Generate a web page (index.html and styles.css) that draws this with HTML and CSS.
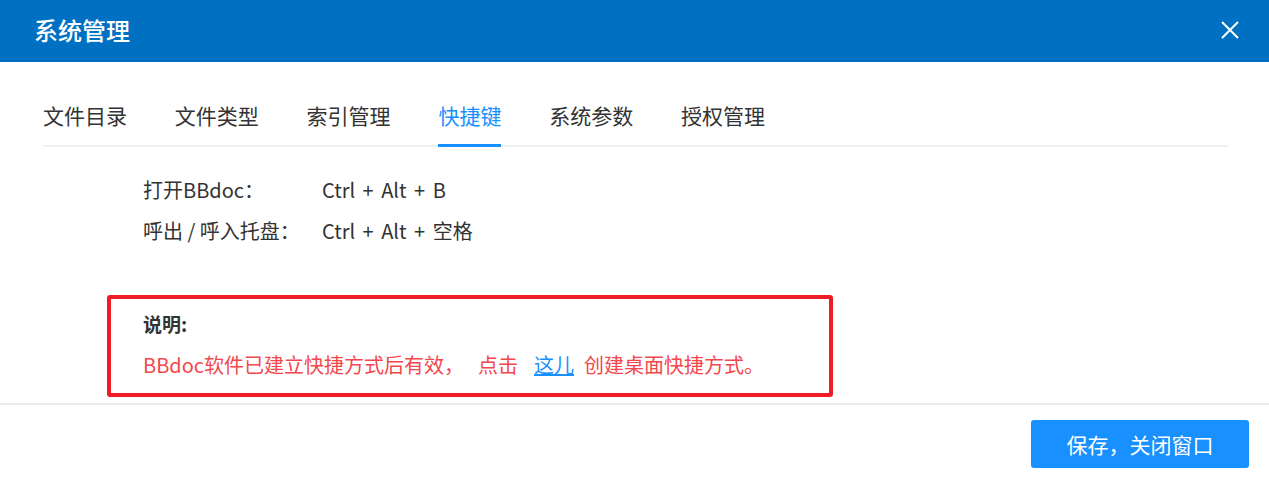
FILE: index.html
```html
<!DOCTYPE html>
<html lang="zh-CN">
<head>
    <meta charset="UTF-8">
    <meta name="viewport" content="width=device-width, initial-scale=1.0">
    <title>系统管理</title>
    <link rel="stylesheet" href="styles.css">
</head>
<body>
    <div class="dialog">
        <div class="dialog-header">
            <h1>系统管理</h1>
            <span class="close-btn">
                <svg width="18" height="18" viewBox="0 0 18 18">
                    <path d="M1 1 L17 17 M17 1 L1 17" stroke="#fff" stroke-width="2" fill="none"/>
                </svg>
            </span>
        </div>

        <div class="tabs">
            <span class="tab">文件目录</span>
            <span class="tab">文件类型</span>
            <span class="tab">索引管理</span>
            <span class="tab active">快捷键</span>
            <span class="tab">系统参数</span>
            <span class="tab">授权管理</span>
        </div>

        <div class="tab-body">
            <div class="keys">
                <span>打开BBdoc：</span>
                <span class="combo">Ctrl + Alt + B</span>
                <span>呼出 / 呼入托盘：</span>
                <span class="combo">Ctrl + Alt + 空格</span>
            </div>

            <div class="note">
                <div class="note-title">说明:</div>
                <div class="note-text">BBdoc软件已建立快捷方式后有效，<span class="gap">点击</span><a href="#" class="here">这儿</a><span>创建桌面快捷方式。</span></div>
            </div>
        </div>

        <div class="dialog-footer">
            <button class="save-btn">保存，关闭窗口</button>
        </div>
    </div>
</body>
</html>
```

FILE: styles.css
```css
body {
    margin: 0;
    font-family: "Noto Sans CJK SC", "Noto Sans", sans-serif;
    color: #333;
    background: #fff;
}
.dialog {
    width: 1269px;
}
.dialog-header {
    height: 62px;
    background-color: #0071c2;
    display: flex;
    align-items: center;
    justify-content: space-between;
    padding: 0 30px 0 34px;
}
.dialog-header h1 {
    margin: 0;
    font-size: 24px;
    font-weight: 500;
    color: #fff;
    line-height: 1;
    padding-bottom: 2px;
}
.close-btn {
    display: flex;
    padding-bottom: 2px;
}
.tabs {
    display: flex;
    margin: 0 41px 0 43px;
    padding-top: 38px;
    border-bottom: 2px solid #efefef;
}
.tab {
    font-size: 21px;
    line-height: 30px;
    margin-right: 47.8px;
    padding-bottom: 14px;
    border-bottom: 3px solid transparent;
    margin-bottom: -2px;
    color: #333;
}
.tab.active {
    color: #1890ff;
    border-bottom-color: #1890ff;
}
.tab-body {
    padding: 22px 0 0 107px;
}
.keys {
    display: grid;
    grid-template-columns: 179px auto;
    padding-left: 36px;
    font-size: 20px;
    line-height: 41px;
}
.combo {
    word-spacing: 3px;
}
.note {
    width: 686px;
    margin-top: 44px;
    border: 4px solid #ee1d27;
    border-radius: 3px;
    padding: 10px 0 13px 32px;
}
.note-title {
    font-size: 19px;
    font-weight: bold;
    line-height: 30px;
}
.note-text {
    margin-top: 11px;
    font-size: 20px;
    line-height: 30px;
    color: #f4474d;
}
.gap {
    margin-left: 14px;
    margin-right: 16px;
}
.here {
    color: #1890ff;
    text-decoration: underline;
    margin-right: 10px;
}
.dialog-footer {
    margin-top: 6px;
    border-top: 2px solid #ececec;
    display: flex;
    justify-content: flex-end;
    padding: 15px 20px 0 0;
}
.save-btn {
    width: 218px;
    height: 48px;
    background-color: #1890ff;
    color: #fff;
    border: none;
    border-radius: 3px;
    font-family: inherit;
    font-size: 21px;
    cursor: pointer;
}
```
